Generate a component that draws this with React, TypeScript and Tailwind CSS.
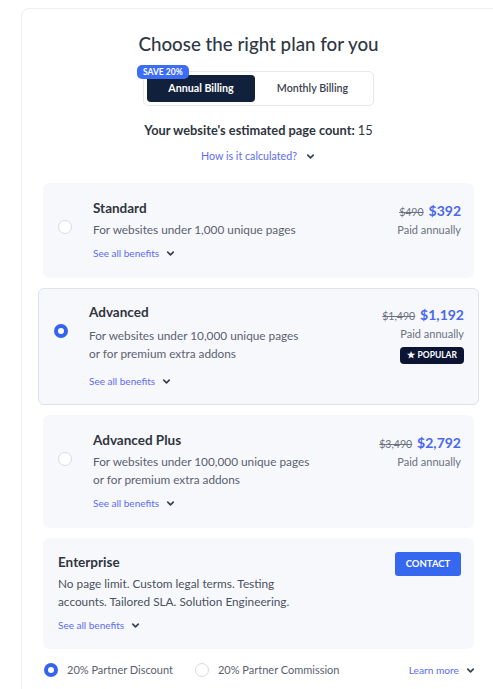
import React from "react";

const Chevron = ({ className = "" }: { className?: string }) => (
  <svg viewBox="0 0 12 12" className={className} fill="none" stroke="currentColor" strokeWidth="1.8" strokeLinecap="round" strokeLinejoin="round">
    <path d="M3 4.5 L6 7.5 L9 4.5" />
  </svg>
);

const Radio = ({ on }: { on: boolean }) =>
  on ? (
    <div className="w-[14px] h-[14px] rounded-full border-[4px] border-[#3563f0] bg-white shrink-0" />
  ) : (
    <div className="w-[14px] h-[14px] rounded-full border border-[#d9dbe3] bg-white shrink-0" />
  );

const SeeAll = () => (
  <div className="flex items-center gap-[6px] text-[10px] text-[#5b6cf5]">
    <span>See all benefits</span>
    <Chevron className="w-[11px] h-[11px] text-[#374151]" />
  </div>
);

type PlanProps = {
  name: string;
  lines: string[];
  old: string;
  price: string;
  selected?: boolean;
  popular?: boolean;
};

const Plan = ({ name, lines, old, price, selected, popular }: PlanProps) => (
  <div
    className={
      selected
        ? "mx-[-5px] rounded-[6px] border border-[#dfe2ea] bg-[#f7f8fc] pl-[14px] pr-[14px] pt-[15px] pb-[15px] flex"
        : "rounded-[6px] bg-[#f7f8fc] pl-[14px] pr-[13px] pt-[17px] pb-[17px] flex"
    }
  >
    <div className="pt-[20px] w-[36px] shrink-0 pl-[1px]">
      <Radio on={!!selected} />
    </div>
    <div className="flex-1">
      <div className="text-[13.5px] font-bold text-[#2f3540] leading-[16px]">{name}</div>
      <div className={selected ? "mt-[7px] text-[11.8px] text-[#5b6170] leading-[18px]" : "mt-[5px] text-[11.8px] text-[#5b6170] leading-[18px]"}>
        {lines.map((l) => (
          <div key={l}>{l}</div>
        ))}
      </div>
      <div className={selected ? "mt-[11px]" : "mt-[7px]"}>
        <SeeAll />
      </div>
    </div>
    <div className="flex flex-col items-end">
      <div className="flex items-baseline gap-[5px]">
        <span className="text-[10.5px] text-[#6b7280] line-through">{old}</span>
        <span className="text-[14px] font-bold text-[#4a67f0]">{price}</span>
      </div>
      <div className="mt-[1px] text-[11px] text-[#6b7280]">Paid annually</div>
      {popular && (
        <div className="mt-[4px] flex items-center gap-[3px] rounded-[4px] bg-[#0c1533] px-[7px] h-[17px] text-[8.5px] font-bold text-white">
          <span className="text-[9px]">★</span>
          <span>POPULAR</span>
        </div>
      )}
    </div>
  </div>
);

export default function App() {
  return (
    <div className="w-[493px] h-[689px] overflow-hidden bg-white" style={{ fontFamily: "Lato, 'Noto Sans', sans-serif" }}>
      <div className="ml-[21px] mt-[8px] w-[480px] h-[720px] rounded-[8px] border border-[#eceef2] pl-[21px] pr-[26px] pt-[24px]">
        <div className="text-center text-[18.75px] font-medium text-[#2f3744] leading-[22px]">Choose the right plan for you</div>
        <div className="mt-[16px] flex justify-center">
          <div className="relative flex rounded-[5px] border border-[#e6e8ee] p-[3px]">
            <div className="absolute left-[-7px] top-[-7px] rounded-[5px] bg-[#3d6df4] px-[6px] h-[14px] flex items-center text-[8.5px] font-bold text-white">SAVE 20%</div>
            <div className="w-[108px] h-[27px] rounded-[4px] bg-[#12213b] flex items-center justify-center text-[10.7px] font-bold text-white">Annual Billing</div>
            <div className="w-[115px] h-[27px] flex items-center justify-center text-[10.7px] font-semibold text-[#3a4150]">Monthly Billing</div>
          </div>
        </div>
        <div className="mt-[15px] text-center text-[12.8px] font-bold text-[#2f3540]">
          Your website's estimated page count: <span className="font-normal">15</span>
        </div>
        <div className="mt-[8px] flex justify-center items-center gap-[8px] text-[10.7px] text-[#5b6cf5]">
          <span>How is it calculated?</span>
          <Chevron className="w-[11px] h-[11px] text-[#374151]" />
        </div>
        <div className="mt-[19px] flex flex-col gap-[10px]">
          <Plan name="Standard" lines={["For websites under 1,000 unique pages"]} old="$490" price="$392" />
          <Plan
            name="Advanced"
            lines={["For websites under 10,000 unique pages", "or for premium extra addons"]}
            old="$1,490"
            price="$1,192"
            selected
            popular
          />
          <Plan
            name="Advanced Plus"
            lines={["For websites under 100,000 unique pages", "or for premium extra addons"]}
            old="$3,490"
            price="$2,792"
          />
          <div className="rounded-[6px] bg-[#f7f8fc] pl-[15px] pr-[13px] pt-[14px] pb-[16px] flex">
            <div className="flex-1">
              <div className="mt-[2px] text-[13.5px] font-bold text-[#2f3540] leading-[16px]">Enterprise</div>
              <div className="mt-[5px] text-[11.8px] text-[#4b5160] leading-[18px]">
                <div>No page limit. Custom legal terms. Testing</div>
                <div>accounts. Tailored SLA. Solution Engineering.</div>
              </div>
              <div className="mt-[7px]">
                <SeeAll />
              </div>
            </div>
            <div>
              <div className="w-[66px] h-[24px] rounded-[3px] bg-[#3567ef] flex items-center justify-center text-[9.5px] font-bold text-white">CONTACT</div>
            </div>
          </div>
        </div>
        <div className="mt-[13px] flex items-center pl-[1px] text-[11px] text-[#5b6170]">
          <Radio on />
          <span className="ml-[9px]">20% Partner Discount</span>
          <div className="ml-[22px]">
            <Radio on={false} />
          </div>
          <span className="ml-[9px]">20% Partner Commission</span>
          <div className="ml-auto mr-[-2px] flex items-center gap-[6px] text-[10.2px] text-[#5b6cf5]">
            <span>Learn more</span>
            <Chevron className="w-[11px] h-[11px] text-[#374151]" />
          </div>
        </div>
      </div>
    </div>
  );
}
